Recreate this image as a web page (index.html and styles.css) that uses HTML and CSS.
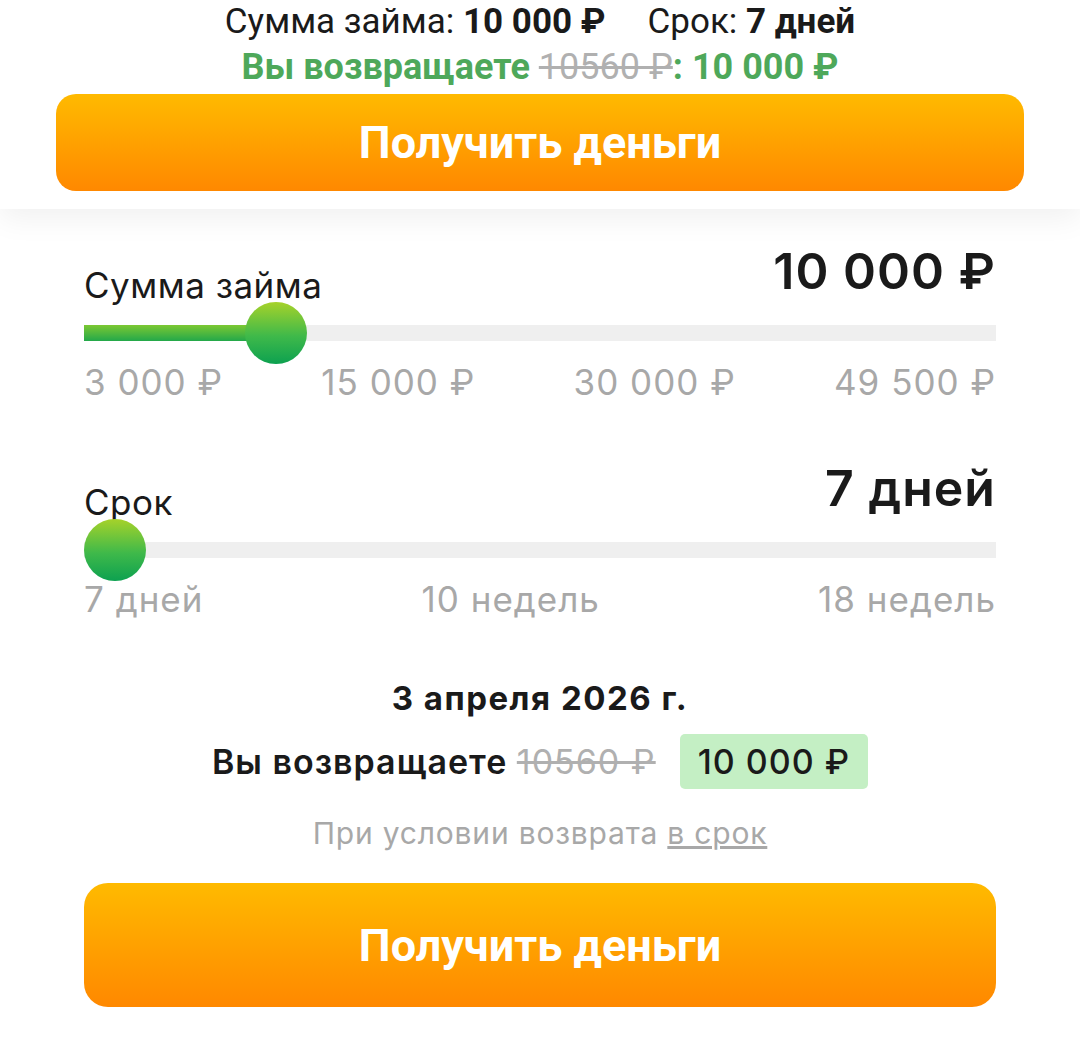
FILE: index.html
```html
<!DOCTYPE html>
<html lang="ru">
<head>
  <meta charset="UTF-8" />
  <meta name="viewport" content="width=device-width, initial-scale=1.0" />
  <title>Калькулятор займа</title>
  <link rel="stylesheet" href="styles.css">
</head>
<body>

  <!-- Sticky summary bar -->
  <header class="summary">
    <div class="summary-line">
      <span>Сумма займа: <b>10 000 ₽</b></span>
      <span>Срок: <b>7 дней</b></span>
    </div>
    <div class="summary-return">
      Вы возвращаете <s>10560 ₽</s>: 10 000 ₽
    </div>
    <button class="cta cta-top">Получить деньги</button>
  </header>

  <main class="calc">
    <!-- Amount slider -->
    <section class="slider">
      <div class="slider-head">
        <span class="slider-label">Сумма займа</span>
        <span class="slider-value">10 000 ₽</span>
      </div>
      <div class="track">
        <div class="fill" style="width: 192px"></div>
        <div class="thumb" style="left: 192px"></div>
      </div>
      <div class="ticks">
        <span>3 000 ₽</span>
        <span>15 000 ₽</span>
        <span>30 000 ₽</span>
        <span>49 500 ₽</span>
      </div>
    </section>

    <!-- Term slider -->
    <section class="slider">
      <div class="slider-head">
        <span class="slider-label">Срок</span>
        <span class="slider-value">7 дней</span>
      </div>
      <div class="track">
        <div class="fill" style="width: 0px"></div>
        <div class="thumb" style="left: 31px"></div>
      </div>
      <div class="ticks">
        <span>7 дней</span>
        <span>10 недель</span>
        <span>18 недель</span>
      </div>
    </section>

    <!-- Result -->
    <div class="result">
      <div class="result-date">3 апреля 2026 г.</div>
      <div class="result-sum">
        <span>Вы возвращаете <s>10560 ₽</s></span>
        <span class="badge">10 000 ₽</span>
      </div>
      <div class="result-note">При условии возврата <a href="#">в срок</a></div>
    </div>

    <button class="cta cta-bottom">Получить деньги</button>
  </main>

</body>
</html>
```

FILE: styles.css
```css
/* Global reset */
* { box-sizing: border-box; }
body, html {
  margin: 0;
  padding: 0;
  background: #fff;
  color: #1a1a1a;
  font-family: 'Inter', 'Open Sans', sans-serif;
}

/* Summary bar on top */
.summary {
  display: flex;
  flex-direction: column;
  align-items: center;
  padding: 0 56px 18px;
  background: #fff;
  box-shadow: 0 10px 28px rgba(0, 0, 0, 0.06);
  font-family: 'Roboto', sans-serif;
}
.summary-line {
  display: flex;
  gap: 42px;
  font-size: 35px;
  line-height: 44px;
  color: #1a1a1a;
}
.summary-line b { font-weight: 700; }
.summary-return {
  font-size: 36px;
  line-height: 46px;
  font-weight: 700;
  color: #4ea85a;
}
.summary-return s {
  color: #b0b0b0;
  font-weight: 400;
}

/* Orange buttons */
.cta {
  display: block;
  width: 100%;
  border: none;
  color: #fff;
  font-family: 'Roboto', sans-serif;
  font-weight: 700;
  font-size: 45px;
  background: linear-gradient(to bottom, #ffba00 0%, #ff8800 100%);
  cursor: pointer;
}
.cta-top {
  height: 97px;
  margin-top: 4px;
  border-radius: 20px;
}
.cta-bottom {
  height: 124px;
  margin-top: 32px;
  border-radius: 24px;
}

/* Calculator body */
.calc {
  padding: 42px 84px 30px;
}

.slider { margin-bottom: 66px; }
.slider-head {
  display: flex;
  justify-content: space-between;
  align-items: center;
  height: 56px;
}
.slider-label {
  align-self: flex-end;
  margin-bottom: 2px;
  font-size: 35px;
  line-height: 40px;
  letter-spacing: 0.5px;
}
.slider-value {
  margin-top: -16px;
  font-size: 50px;
  font-weight: 600;
  line-height: 56px;
  letter-spacing: 1px;
}

/* Range track */
.track {
  position: relative;
  height: 16px;
  margin-top: 18px;
  background: #efefef;
}
.fill {
  height: 100%;
  background: linear-gradient(to bottom, #7cc832, #23a84a);
}
.thumb {
  position: absolute;
  top: 50%;
  width: 62px;
  height: 62px;
  margin: -31px 0 0 -31px;
  border-radius: 50%;
  background: linear-gradient(to bottom, #a6d22a 0%, #3fb94a 55%, #0da150 100%);
}

.ticks {
  display: flex;
  justify-content: space-between;
  margin-top: 21px;
  font-size: 35px;
  line-height: 40px;
  letter-spacing: 1px;
  color: #a8a8a8;
}

/* Result block */
.result {
  display: flex;
  flex-direction: column;
  align-items: center;
  margin-top: -7px;
}
.result-date {
  font-size: 33px;
  font-weight: 700;
  line-height: 40px;
  letter-spacing: 1.5px;
}
.result-sum {
  display: flex;
  align-items: center;
  gap: 24px;
  margin-top: 16px;
  font-size: 34px;
  font-weight: 600;
  letter-spacing: 1px;
}
.result-sum s {
  color: #b0b0b0;
  font-weight: 400;
}
.badge {
  padding: 7px 18px;
  background: #c4efc4;
  border-radius: 5px;
  font-weight: 500;
}
.result-note {
  margin-top: 26px;
  font-size: 30px;
  letter-spacing: 0.8px;
  color: #a8a8a8;
}
.result-note a {
  color: #a8a8a8;
}
```
